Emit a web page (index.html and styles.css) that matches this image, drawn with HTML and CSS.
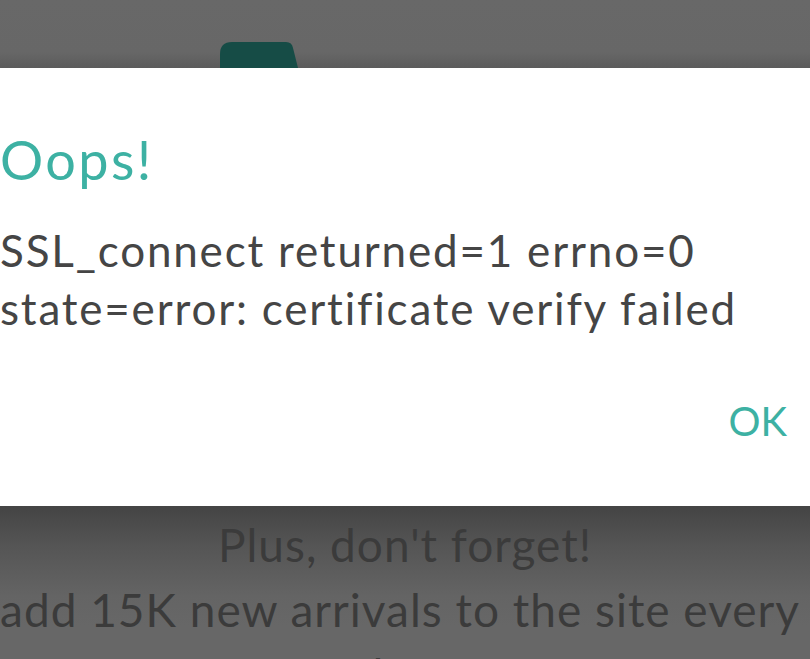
FILE: index.html
```html
<!DOCTYPE html>
<html lang="en">
<head>
	<meta charset="UTF-8">
	<title>Oops</title>
	<link rel="stylesheet" href="styles.css">
</head>
<body>
	<div class="backdrop-top">
		<svg class="tab" width="80" height="26" viewBox="0 0 80 26">
			<path d="M12 0 H66 Q72 0 73 6 L78 26 H0 V12 Q0 0 12 0 Z" fill="#164c46"/>
		</svg>
	</div>
	<div class="dialog">
		<h1 class="title">Oops!</h1>
		<p class="message">SSL_connect returned=1 errno=0<br>state=error: certificate verify failed</p>
		<div class="actions">
			<span class="ok">OK</span>
		</div>
	</div>
	<div class="backdrop-bottom">
		<div class="line">Plus, don't forget!</div>
		<div class="line">add 15K new arrivals to the site every</div>
		<div class="line">day.</div>
	</div>
</body>
</html>
```

FILE: styles.css
```css
html, body {
	margin: 0;
	padding: 0;
	height: 659px;
	overflow: hidden;
	font-family: Lato, "Open Sans", sans-serif;
	background: #676767;
}
.backdrop-top {
	height: 68px;
	display: flex;
	align-items: flex-end;
	padding-left: 220px;
	background: linear-gradient(to bottom, #686868 0, #676767 52px, #5b5b5b 68px);
}
.tab {
	display: block;
}
.dialog {
	background: #fff;
	height: 438px;
	box-sizing: border-box;
	padding-top: 59px;
}
.title {
	margin: 0;
	font-size: 54px;
	line-height: 65px;
	font-weight: 400;
	letter-spacing: 2.4px;
	color: #3db1a3;
}
.message {
	margin: 29px 0 0;
	font-size: 44px;
	line-height: 58px;
	letter-spacing: 1.8px;
	color: #454545;
	white-space: nowrap;
}
.actions {
	display: flex;
	justify-content: flex-end;
	padding-right: 23px;
	margin-top: 60px;
}
.ok {
	font-size: 40px;
	line-height: 48px;
	color: #3db1a3;
}
.backdrop-bottom {
	height: 153px;
	padding-top: 6px;
	box-sizing: border-box;
	background: linear-gradient(to bottom, #444 0, #555 40px, #646464 90px, #676767 120px);
	display: flex;
	flex-direction: column;
	align-items: center;
}
.line {
	font-size: 46px;
	line-height: 65px;
	letter-spacing: 1px;
	color: #3b3b3b;
	white-space: nowrap;
}
.line + .line {
	margin-right: 10px;
}
```
